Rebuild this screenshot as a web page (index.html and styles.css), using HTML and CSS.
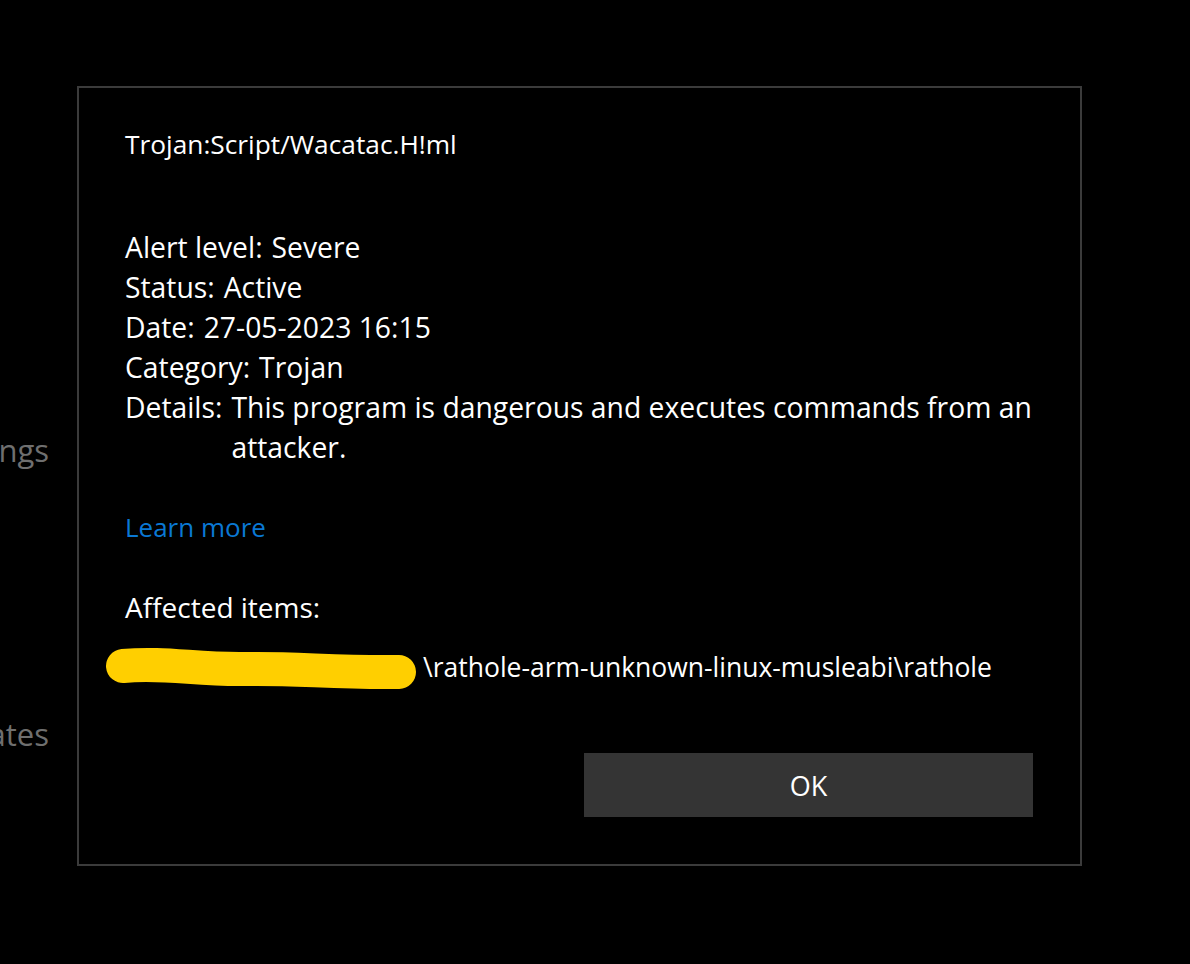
FILE: index.html
```html
<!DOCTYPE html>
<html lang="en">
<head>
<meta charset="utf-8">
<title>Threat details</title>
<link rel="stylesheet" href="styles.css">
</head>
<body>
<div class="page">
  <nav class="nav">
    <div class="nav-item nav-settings"><span>Settings</span></div>
    <div class="nav-item nav-updates"><span>Protection updates</span></div>
  </nav>
</div>
<div class="dialog">
  <div class="title">Trojan:Script/Wacatac.H!ml</div>
  <div class="details">
    <div class="row"><span class="label">Alert level:</span><span class="value">Severe</span></div>
    <div class="row"><span class="label">Status:</span><span class="value">Active</span></div>
    <div class="row"><span class="label">Date:</span><span class="value">27-05-2023 16:15</span></div>
    <div class="row"><span class="label">Category:</span><span class="value">Trojan</span></div>
    <div class="row"><span class="label">Details:</span><span class="value">This program is dangerous and executes commands from an attacker.</span></div>
  </div>
  <a class="learn" href="#">Learn more</a>
  <div class="affected">Affected items:</div>
  <div class="path">
    <svg class="redact" width="312" height="40" viewBox="0 0 312 40" aria-hidden="true">
      <path d="M17 19 C 60 15, 90 23, 140 22 C 190 21, 230 26, 293 25" fill="none" stroke="#ffcf00" stroke-width="34" stroke-linecap="round"/>
    </svg>
    <span class="path-text">\rathole-arm-unknown-linux-musleabi\rathole</span>
  </div>
  <div class="actions">
    <button class="ok" type="button">OK</button>
  </div>
</div>
</body>
</html>
```

FILE: styles.css
```css
html, body {
  margin: 0;
  padding: 0;
  background: #000;
}
body {
  width: 1190px;
  height: 964px;
  overflow: hidden;
  position: relative;
  font-family: "Open Sans", "Noto Sans", sans-serif;
  color: #fff;
}
.page {
  height: 964px;
}
.nav {
  width: 49px;
  overflow: hidden;
  padding-top: 428px;
}
.nav-item {
  display: flex;
  justify-content: flex-end;
  white-space: nowrap;
  font-size: 31px;
  line-height: 44px;
  color: #6f6f6f;
}
.nav-updates {
  margin-top: 240px;
}
.dialog {
  position: absolute;
  left: 77px;
  top: 86px;
  width: 1005px;
  box-sizing: border-box;
  border: 2px solid #3b3b3b;
  background: #000;
  padding: 36px 47px 47px 46px;
  font-size: 26px;
  line-height: 40px;
  display: flex;
  flex-direction: column;
}
.title {
  font-size: 26.3px;
  margin-bottom: 63px;
}
.details {
  display: flex;
  flex-direction: column;
  font-size: 28.3px;
  margin-right: -16px;
}
.row {
  display: flex;
  gap: 9px;
}
.label {
  flex: none;
}
.value {
  flex: 1;
}
.learn {
  margin-top: 40px;
  font-size: 26px;
  color: #0a78d4;
  text-decoration: none;
  align-self: flex-start;
}
.affected {
  margin-top: 40px;
  font-size: 28px;
}
.path {
  margin-top: 20px;
  display: flex;
  align-items: center;
  height: 40px;
  margin-left: -19px;
  font-size: 26.5px;
}
.redact {
  flex: none;
  display: block;
  overflow: visible;
}
.path-text {
  margin-left: 5px;
  white-space: nowrap;
}
.actions {
  margin-top: 66px;
  display: flex;
  justify-content: flex-end;
}
.ok {
  width: 449px;
  height: 64px;
  border: none;
  background: #343434;
  color: #fff;
  font-family: inherit;
  font-size: 27px;
  padding: 0;
}
```
